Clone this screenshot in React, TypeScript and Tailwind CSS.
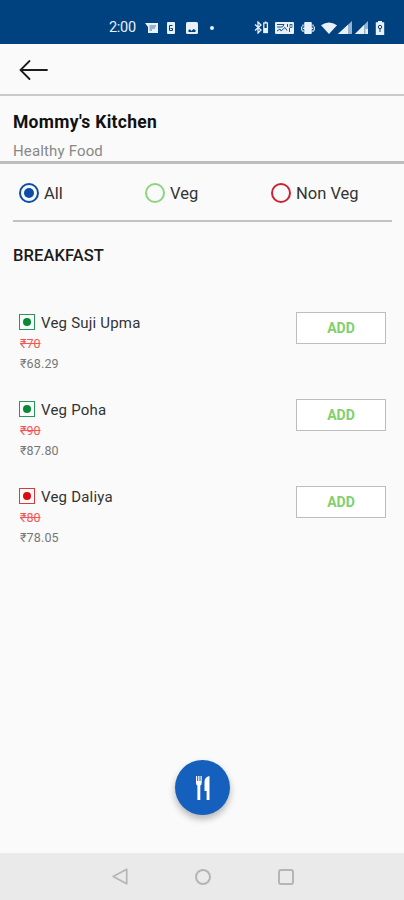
import clsx from "clsx";

type Dish = {
  name: string;
  oldPrice: string;
  price: string;
  veg: boolean;
};

const dishes: Dish[] = [
  { name: "Veg Suji Upma", oldPrice: "₹70", price: "₹68.29", veg: true },
  { name: "Veg Poha", oldPrice: "₹90", price: "₹87.80", veg: true },
  { name: "Veg Daliya", oldPrice: "₹80", price: "₹78.05", veg: false },
];

function StatusBar() {
  return (
    <div className="flex h-11 items-center bg-[#00427f] pt-[11px] pl-[109px] text-[#e8f0fa]">
      <span className="w-[36px] text-[14.5px] leading-4 tracking-[-0.3px]">2:00</span>

      <svg width="13" height="12" viewBox="0 0 13 12" fill="currentColor">
        <path d="M0 1h13v10H3V5z" />
        <path d="M4.500 4h6.500M4.500 6h5.500M4.500 8h2.500" stroke="#00427f" strokeWidth="0.7" />
      </svg>
      <svg className="ml-[9px]" width="8" height="12" viewBox="0 0 8 12" fill="currentColor">
        <rect width="8" height="12" rx="1" />
        <path d="M5.500 3.500h-3v5h3v-2h-2" fill="none" stroke="#00427f" strokeWidth="1" />
      </svg>
      <svg className="ml-[11px]" width="12" height="12" viewBox="0 0 12 12" fill="currentColor">
        <rect width="12" height="12" rx="1.5" />
        <path d="M2.500 10V8l1.500-.8L5.500 9l2-2L9.500 8v2z" fill="#00427f" />
      </svg>
      <span className="ml-[12px] size-1 rounded-full bg-[#e8f0fa]" />

      <svg className="ml-[40px]" width="15" height="13" viewBox="0 0 15 13">
        <path d="M1 3.500l6 5.500-3 3V1l3 3-6 5.500" fill="none" stroke="currentColor" strokeWidth="1.3" />
        <rect x="9.8" y="2" width="3.6" height="9.5" fill="none" stroke="currentColor" strokeWidth="1.3" />
        <path d="M10.8 .5h1.6v1.500h-1.600zM9.800 7h3.600v4H9.800z" fill="currentColor" />
      </svg>
      <svg className="ml-[6px]" width="19" height="12" viewBox="0 0 19 12">
        <rect width="19" height="12" rx="1" fill="currentColor" />
        <path d="M2 2.500h7L7.500 5H2M2 9l3-2 1 2 4-3.500 2 3M12.500 2v3M14.500 6v4" fill="none" stroke="#00427f" strokeWidth="0.9" />
        <rect x="15" y="2.500" width="2" height="3" fill="none" stroke="#00427f" strokeWidth="0.7" />
      </svg>
      <svg className="ml-[7px]" width="14" height="12" viewBox="0 0 14 12" fill="currentColor">
        <rect x="3.200" width="7.600" height="12" rx="1" />
        <path d="M.7 4.500v4M2 2.500v2M2 8v2M12 2.500v2M12 8v2M13.300 4.500v4M2 6.300h10" stroke="currentColor" strokeWidth="1.200" />
      </svg>
      <svg className="ml-[6px]" width="16" height="12" viewBox="0 0 16 12" fill="currentColor">
        <path d="M0 3.200Q8-2.400 16 3.200L8 12z" />
      </svg>
      <svg className="ml-[1px]" width="14" height="13" viewBox="0 0 14 13" fill="currentColor">
        <path d="M14 0v13H0z" opacity="0.65" />
        <path d="M10 3.700V13H0z" />
      </svg>
      <svg className="ml-[3px]" width="14" height="13" viewBox="0 0 14 13" fill="currentColor">
        <path d="M13 0v13H0z" opacity="0.65" />
        <path d="M9 4V13H0zM10.500 8H13v5h-2.500z" />
      </svg>
      <svg className="ml-[6px]" width="10" height="14" viewBox="0 0 10 14" fill="currentColor">
        <path d="M3 0h4v1.300h2.200V14H.8V1.300H3z" />
        <circle cx="5" cy="6" r="1.700" fill="none" stroke="#00427f" strokeWidth="1" />
        <path d="M5 8v3" stroke="#00427f" strokeWidth="1" />
      </svg>
    </div>
  );
}

function Filter({ label, color, checked }: { label: string; color: string; checked?: boolean }) {
  return (
    <label className="flex w-[126px] shrink-0 items-center gap-[5px] text-[16.5px] leading-5 text-[#333]">
      <span className={clsx("flex size-5 items-center justify-center rounded-full border-2", color)}>
        {checked && <span className="size-[10px] rounded-full bg-[#0b4da8]" />}
      </span>
      <span className="pt-px">{label}</span>
    </label>
  );
}

function DishRow({ dish }: { dish: Dish }) {
  return (
    <div className="flex h-[87px] items-start justify-between">
      <div>
        <div className="flex h-[22px] items-center gap-[6px] text-[15px] tracking-[0.2px] text-[#333]">
          <span
            className={clsx(
              "mb-0.5 flex size-4 items-center justify-center border-[1.5px]",
              dish.veg ? "border-[#26965a]" : "border-[#dc3a3a]"
            )}
          >
            <span className={clsx("size-2 rounded-full", dish.veg ? "bg-[#078a35]" : "bg-[#d90b12]")} />
          </span>
          {dish.name}
        </div>
        <p className="pl-px text-[12.5px] leading-5 text-[#f45555] line-through">{dish.oldPrice}</p>
        <p className="pl-px text-[12.5px] leading-5 tracking-[0.15px] text-[#777]">{dish.price}</p>
      </div>
      <button className="h-8 w-[90px] border border-[#bdbdbd] bg-white text-[14px] font-bold text-[#81cf6d]">
        ADD
      </button>
    </div>
  );
}

export default function App() {
  return (
    <div className="flex h-[900px] w-[404px] flex-col overflow-hidden bg-[#fafafa] font-[Roboto,'Noto_Sans',sans-serif]">
      <StatusBar />

      <header className="flex h-[52px] items-center border-b-2 border-[#cacaca] pl-[19px]">
        <svg className="mt-0.5" width="30" height="22" viewBox="0 0 30 22" fill="none" stroke="#1c1c1c" strokeWidth="1.800" strokeLinecap="round">
          <path d="M28 11H1.500M10.500 2l-9 9 9 9" />
        </svg>
      </header>

      <section className="h-[68px] border-b-3 border-[#bdbdbd] px-[13px] pt-[15px]">
        <h1 className="text-[17.5px] leading-[22px] font-bold tracking-[0.3px] text-[#111]">Mommy's Kitchen</h1>
        <p className="mt-[8px] text-[15px] leading-5 tracking-[0.15px] text-[#888]">Healthy Food</p>
      </section>

      <main className="flex flex-1 flex-col px-[13px]">
        <div className="-mr-px flex h-[58px] items-center border-b-2 border-[#c2c2c2] pt-0.5 pl-[6px]">
          <Filter label="All" color="border-[#0b4da8]" checked />
          <Filter label="Veg" color="border-[#8bd67c]" />
          <Filter label="Non Veg" color="border-[#cc2334]" />
        </div>

        <h2 className="mt-[23px] text-[16.5px] leading-[22px] font-medium tracking-[0.1px] text-[#1c1c1c]">BREAKFAST</h2>

        <div className="mt-[45px] pr-[5px] pl-[6px]">
          {dishes.map((dish) => (
            <DishRow key={dish.name} dish={dish} />
          ))}
        </div>

        <button className="mt-auto mb-[38px] ml-px flex size-[55px] items-center justify-center self-center rounded-full bg-[#1560bd] shadow-[0_4px_7px_rgba(0,0,0,0.28)]">
          <svg width="16" height="24" viewBox="0 0 16 24" fill="#fff">
            <path d="M1 0h1.200v5h1V0h1.300v5h1V0h1.200v7q0 2-1.400 2.500V24H2.400V9.500Q1 9 1 7z" />
            <path d="M14.500 0v24h-2.900v-9H9.500V6q0-5 5-6z" />
          </svg>
        </button>
      </main>

      <nav className="flex h-[47px] items-center justify-between bg-[#eaeaea] pr-[110px] pl-[112px] text-[#b5b5b5]">
        <svg width="16" height="17" viewBox="0 0 16 17" fill="none" stroke="currentColor" strokeWidth="1.700" strokeLinejoin="round">
          <path d="M14.700 1.200v14.600L1.200 8.500z" />
        </svg>
        <span className="mr-px size-4 rounded-full border-2 border-current" />
        <span className="size-4 rounded-[3px] border-2 border-current" />
      </nav>
    </div>
  );
}
